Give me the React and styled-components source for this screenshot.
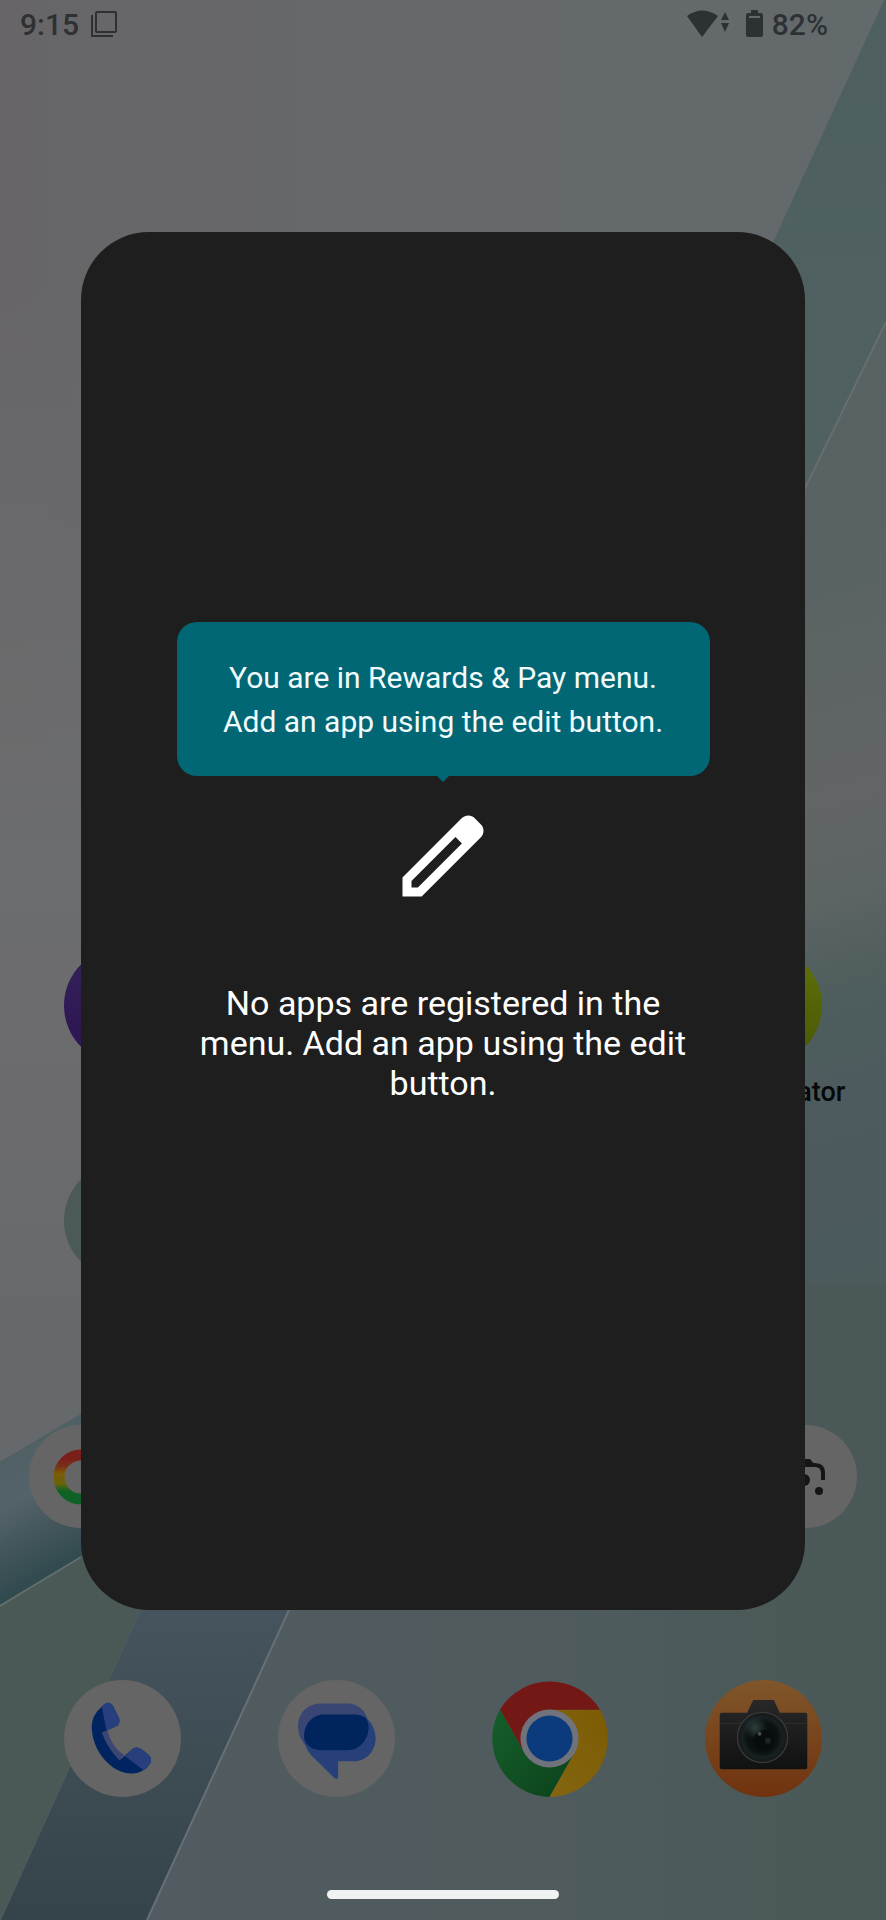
import React from "react";
import styled, { createGlobalStyle } from "styled-components";

const GlobalStyle = createGlobalStyle`
  * {
    box-sizing: border-box;
  }
  body {
    margin: 0;
    background: #4d5859;
    font-family: Roboto, "Noto Sans", sans-serif;
  }
  button {
    padding: 0;
    border: 0;
    background: none;
    color: inherit;
    font: inherit;
    cursor: pointer;
  }
`;

const Screen = styled.div`
  position: relative;
  display: flex;
  flex-direction: column;
  min-height: 100vh;
  overflow: hidden;
`;

const Backdrop = styled.svg`
  position: absolute;
  inset: 0;
  width: 100%;
  height: 100%;
`;

const StatusBar = styled.header`
  position: relative;
  display: flex;
  align-items: center;
  justify-content: space-between;
  height: 48px;
  padding: 0 58px 0 20px;
  color: #2e3134;
  font-size: 30px;
  font-weight: 500;
`;

const StatusGroup = styled.div`
  display: flex;
  align-items: center;
  gap: ${(props) => props.$gap}px;

  svg {
    display: block;
  }
`;

const Home = styled.main`
  position: relative;
  display: flex;
  flex-direction: column;
  margin-top: auto;
`;

const AppGrid = styled.div`
  display: grid;
  grid-template-columns: repeat(4, 1fr);
  grid-auto-rows: 215px;
  padding: 0 16px;
  margin-bottom: 48px;
`;

const AppButton = styled.button`
  display: flex;
  flex-direction: column;
  align-items: center;
  gap: 12px;
  grid-column: ${(props) => props.$column};
  color: #060809;
  font-size: 27px;
  font-weight: 500;
  line-height: 32px;
`;

const AppDisc = styled.span`
  width: 117px;
  height: 117px;
  border-radius: 50%;
  background: ${(props) => props.$fill};
`;

const SearchBar = styled.div`
  display: flex;
  align-items: center;
  justify-content: space-between;
  height: 103px;
  margin: 0 29px 152px;
  padding: 0 24px;
  border-radius: 52px;
  background: #656565;

  svg {
    display: block;
  }
`;

const Dock = styled.nav`
  display: grid;
  grid-template-columns: repeat(4, 1fr);
  justify-items: center;
  padding: 0 16px;
`;

const DockButton = styled.button`
  width: 117px;
  height: 117px;
  border-radius: 50%;

  svg {
    display: block;
    width: 100%;
    height: 100%;
  }
`;

const HomeHandle = styled.div`
  align-self: center;
  width: 232px;
  height: 9px;
  margin: 93px 0 21px;
  border-radius: 5px;
  background: #f1f3f3;
`;

const Overlay = styled.div`
  position: absolute;
  inset: 0;
  display: flex;
  padding: 232px 81px 310px;
`;

const Dialog = styled.section`
  flex: 1;
  display: flex;
  flex-direction: column;
  align-items: center;
  padding-top: 390px;
  border-radius: 68px;
  background: #1e1e1e;
  color: #fff;
  text-align: center;
`;

const Tooltip = styled.div`
  position: relative;
  width: 533px;
  max-width: 100%;
  padding: 34px 40px 32px;
  border-radius: 20px;
  background: #026775;
  color: #f1fbfc;
  font-size: 30px;
  line-height: 44px;

  &::after {
    content: "";
    position: absolute;
    top: 100%;
    left: 50%;
    margin-left: -6px;
    border: 6px solid transparent;
    border-top-color: #026775;
  }
`;

const EditButton = styled.button`
  margin-top: 26px;

  svg {
    display: block;
  }
`;

const EmptyText = styled.p`
  max-width: 520px;
  margin: 73px 0 0;
  font-size: 34px;
  line-height: 40px;
`;

function Wallpaper() {
  return (
    <Backdrop viewBox="0 0 886 1920" preserveAspectRatio="none" aria-hidden="true">
      <defs>
        <linearGradient id="sky" x1="0" y1="0" x2="1" y2="0">
          <stop offset="0" stopColor="#676568" />
          <stop offset="0.5" stopColor="#66696c" />
          <stop offset="1" stopColor="#636a6b" />
        </linearGradient>
        <linearGradient id="skyLow" x1="0" y1="0" x2="0" y2="1">
          <stop offset="0.15" stopColor="#6c6d6e" stopOpacity="0" />
          <stop offset="0.45" stopColor="#6c6d6e" />
          <stop offset="0.58" stopColor="#6b6b6e" />
          <stop offset="0.72" stopColor="#65696c" />
        </linearGradient>
        <linearGradient id="glass" x1="0" y1="0" x2="0" y2="1">
          <stop offset="0" stopColor="#4e5f60" />
          <stop offset="1" stopColor="#546463" />
        </linearGradient>
        <linearGradient id="pane" gradientUnits="userSpaceOnUse" x1="700" y1="320" x2="950" y2="1270">
          <stop offset="0" stopColor="#566262" />
          <stop offset="0.3" stopColor="#5a6363" />
          <stop offset="0.5" stopColor="#626565" />
          <stop offset="0.6" stopColor="#5d6464" />
          <stop offset="0.7" stopColor="#4e5d5d" />
          <stop offset="0.85" stopColor="#4c5a5e" />
          <stop offset="1" stopColor="#4b5a5b" />
        </linearGradient>
        <linearGradient id="roll" gradientUnits="userSpaceOnUse" x1="20" y1="1440" x2="90" y2="1570">
          <stop offset="0" stopColor="#4f6063" />
          <stop offset="0.35" stopColor="#54636a" />
          <stop offset="0.65" stopColor="#415459" />
          <stop offset="1" stopColor="#2a464a" />
        </linearGradient>
        <linearGradient id="floor" x1="0" y1="0" x2="1" y2="0">
          <stop offset="0.15" stopColor="#515b61" />
          <stop offset="0.6" stopColor="#4f5b5d" />
          <stop offset="1" stopColor="#4a5857" />
        </linearGradient>
        <linearGradient id="band" x1="0" y1="0" x2="0" y2="1">
          <stop offset="0" stopColor="#46545d" />
          <stop offset="1" stopColor="#35434a" />
        </linearGradient>
      </defs>
      <rect width="886" height="1920" fill="url(#sky)" />
      <rect width="886" height="1920" fill="url(#skyLow)" />
      <path d="M884 0h2v1100H380Z" fill="url(#glass)" />
      <path d="M886 322V1420H340Z" fill="url(#pane)" />
      <path d="M886 322 740 622" stroke="#676e6d" strokeWidth="2" />
      <path d="M0 1462 300 1284H886V1920H0Z" fill="url(#floor)" />
      <path d="M0 1462 300 1284V1423L0 1606Z" fill="url(#roll)" />
      <path d="M0 1606 300 1423 140 1610 0 1920Z" fill="#4a5956" />
      <path d="M0 1606 81 1557" stroke="#616e6d" strokeWidth="2" />
      <path d="M141 1610H289L147 1920H1Z" fill="url(#band)" />
      <path d="M289 1610 147 1920" stroke="#667076" strokeWidth="2" />
    </Backdrop>
  );
}

function PhoneIcon() {
  return (
    <svg viewBox="0 0 350 350">
      <circle cx="175" cy="175" r="175" fill="#656565" />
      <path d="M112 156 L128 142 Q140 200 180 224 L166 240 Q130 205 112 156Z" fill="#3b4673" />
      <path
        d="M113 80 Q132 59 146 76 L165 115 Q168 128 160 137 L113 157 Q132 207 166 240 L204 207 Q217 197 232 207 L252 223 Q267 236 256 252 Q236 280 203 280 C140 280 82 210 83 137 Q84 104 113 80Z"
        fill="#00245f"
      />
      <path d="M113 80 Q132 59 146 76 L165 115 Q168 128 160 137 L127 152Z" fill="#27407d" />
      <path d="M182 227 L204 207 Q217 197 232 207 L252 223 Q267 236 256 252 Q250 263 238 270Z" fill="#27407d" />
    </svg>
  );
}

function MessagesIcon() {
  return (
    <svg viewBox="0 0 350 350">
      <circle cx="175" cy="175" r="175" fill="#656565" />
      <path d="M128 70H210C240 70 271 96 271 140S240 210 210 210H100C78 196 60 172 60 137C60 98 90 70 128 70Z" fill="#394673" />
      <path d="M137 103H232C268 103 292 140 292 174C292 214 262 243 228 243H180V289Q179 301 169 293L102 228C85 208 78 190 78 168C78 130 106 103 137 103Z" fill="#27407a" />
      <path d="M137 103H232Q250 104 262 113C268 122 271 130 271 142C271 180 240 210 210 210H134C102 210 78 194 78 168C78 130 106 103 137 103Z" fill="#00245e" />
    </svg>
  );
}

function ChromeIcon() {
  return (
    <svg viewBox="0 0 350 350">
      <defs>
        <linearGradient id="chromeGreen" x1="0" y1="0" x2="1" y2="1">
          <stop offset="0" stopColor="#155f2c" />
          <stop offset="1" stopColor="#0c421a" />
        </linearGradient>
        <linearGradient id="chromeYellow" x1="1" y1="0" x2="0" y2="1">
          <stop offset="0" stopColor="#7c5b02" />
          <stop offset="1" stopColor="#846611" />
        </linearGradient>
      </defs>
      <path d="M27 88A175 175 0 0 0 175 350L250 218 100 218Z" fill="url(#chromeGreen)" />
      <path d="M175 350A175 175 0 0 0 326 88H175L250 218Z" fill="url(#chromeYellow)" />
      <path d="M27 88A175 175 0 0 1 326 89H175L100 218Z" fill="#741816" />
      <circle cx="175" cy="175" r="87" fill="#71737c" />
      <circle cx="175" cy="175" r="69" fill="#0b3b7d" />
    </svg>
  );
}

function CameraIcon() {
  return (
    <svg viewBox="0 0 350 350">
      <defs>
        <linearGradient id="camDisc" x1="0" y1="0" x2="0" y2="1">
          <stop offset="0" stopColor="#80562a" />
          <stop offset="1" stopColor="#70330f" />
        </linearGradient>
        <linearGradient id="camBody" x1="0" y1="0" x2="0" y2="1">
          <stop offset="0" stopColor="#292828" />
          <stop offset="1" stopColor="#101111" />
        </linearGradient>
        <radialGradient id="camLens" cx="0.5" cy="0.5" r="0.5">
          <stop offset="0" stopColor="#080b0b" />
          <stop offset="0.6" stopColor="#0b1010" />
          <stop offset="0.8" stopColor="#182021" />
          <stop offset="1" stopColor="#151818" />
        </radialGradient>
        <radialGradient id="camGlare" cx="0.5" cy="0.5" r="0.5">
          <stop offset="0" stopColor="#2f3f3e" />
          <stop offset="1" stopColor="#2f3f3e" stopOpacity="0" />
        </radialGradient>
      </defs>
      <circle cx="175" cy="175" r="175" fill="url(#camDisc)" />
      <path d="M144 60H206L224 98H300Q306 98 306 104V260Q306 267 299 267H52Q44 267 44 260V104Q44 98 50 98H126Z" fill="url(#camBody)" />
      <path d="M44 130H306" stroke="#342b28" strokeWidth="3" />
      <circle cx="172" cy="172" r="75" fill="url(#camLens)" stroke="#3c3939" strokeWidth="4" />
      <circle cx="150" cy="142" r="36" fill="url(#camGlare)" />
      <circle cx="176" cy="180" r="30" fill="#090c0c" />
      <circle cx="163" cy="161" r="6" fill="#454e4d" />
      <circle cx="188" cy="182" r="9" fill="#1c2222" />
    </svg>
  );
}

function GoogleIcon() {
  return (
    <svg width="56" height="56" viewBox="0 0 56 56" aria-hidden="true">
      <defs>
        <linearGradient id="googleRing" x1="0" y1="0" x2="0" y2="1">
          <stop offset="0.1" stopColor="#7b1f1b" />
          <stop offset="0.25" stopColor="#78301a" />
          <stop offset="0.42" stopColor="#7d5b08" />
          <stop offset="0.65" stopColor="#6b6308" />
          <stop offset="0.82" stopColor="#0f6126" />
        </linearGradient>
      </defs>
      <circle cx="28" cy="28" r="22" fill="none" stroke="url(#googleRing)" strokeWidth="11" />
    </svg>
  );
}

function LensIcon() {
  return (
    <svg width="52" height="52" viewBox="0 0 52 52" fill="none" aria-hidden="true">
      <path d="M8 30V22Q8 14 17 14H34Q42 14 42 22V29" stroke="#141515" strokeWidth="4" />
      <path d="M17 13L21 8H29L33 13Z" fill="#141515" />
      <circle cx="23" cy="29" r="6" fill="#141515" />
      <circle cx="38" cy="40" r="4" fill="#141515" />
      <path d="M8 34V36Q8 44 16 44H20" stroke="#141515" strokeWidth="4" />
    </svg>
  );
}

const apps = [
  { name: "Browser", column: 1, fill: "linear-gradient(#35225a, #2b1452)" },
  { name: "Authenticator", column: 4, fill: "linear-gradient(#60720a, #475704)", label: true },
  { name: "Folder", column: 1, fill: "#4c5959" },
];

const dockApps = [
  { name: "Phone", Icon: PhoneIcon },
  { name: "Messages", Icon: MessagesIcon },
  { name: "Chrome", Icon: ChromeIcon },
  { name: "Camera", Icon: CameraIcon },
];

function App() {
  return (
    <>
      <GlobalStyle />
      <Screen>
        <Wallpaper />
        <StatusBar>
          <StatusGroup $gap={12}>
            <span>9:15</span>
            <svg width="28" height="28" viewBox="0 0 28 28" fill="none" stroke="currentColor" strokeWidth="2">
              <rect x="5" y="2" width="20" height="20" rx="1" />
              <path d="M1 5V26H22" />
            </svg>
          </StatusGroup>
          <StatusGroup $gap={9}>
            <svg width="76" height="28" viewBox="0 0 76 28" fill="currentColor">
              <path d="M0 6Q15 -5 31 6L15 27Z" />
              <path d="M34 10 38 2 42 10ZM34 13H42L38 22Z" />
              <path d="M64 0H71V3H74Q76 3 76 5V25Q76 27 74 27H61Q59 27 59 25V5Q59 3 61 3H64ZM62 6V8H73V6Z" fillRule="evenodd" />
            </svg>
            <span>82%</span>
          </StatusGroup>
        </StatusBar>

        <Home>
          <AppGrid>
            {apps.map((item) => (
              <AppButton key={item.name} type="button" $column={item.column} aria-label={item.name}>
                <AppDisc $fill={item.fill} />
                {item.label && <span>{item.name}</span>}
              </AppButton>
            ))}
          </AppGrid>
          <SearchBar>
            <GoogleIcon />
            <LensIcon />
          </SearchBar>
          <Dock>
            {dockApps.map(({ name, Icon }) => (
              <DockButton key={name} type="button" aria-label={name}>
                <Icon />
              </DockButton>
            ))}
          </Dock>
          <HomeHandle />
        </Home>

        <Overlay>
          <Dialog role="dialog" aria-label="Rewards & Pay">
            <Tooltip role="tooltip">You are in Rewards &amp; Pay menu. Add an app using the edit button.</Tooltip>
            <EditButton type="button" aria-label="Edit">
              <svg width="108" height="108" viewBox="0 -960 960 960" fill="currentColor">
                <path
                  fillRule="evenodd"
                  d="M200-200h57l391-391-57-57-391 391v57Zm-80 80v-170l528-527q12-11 26.500-17t30.500-6q16 0 31 6t26 18l55 56q12 11 17.500 26t5.500 30q0 16-5.500 30.500T817-647L290-120H120Z"
                />
              </svg>
            </EditButton>
            <EmptyText>No apps are registered in the menu. Add an app using the edit button.</EmptyText>
          </Dialog>
        </Overlay>
      </Screen>
    </>
  );
}

export default App;
